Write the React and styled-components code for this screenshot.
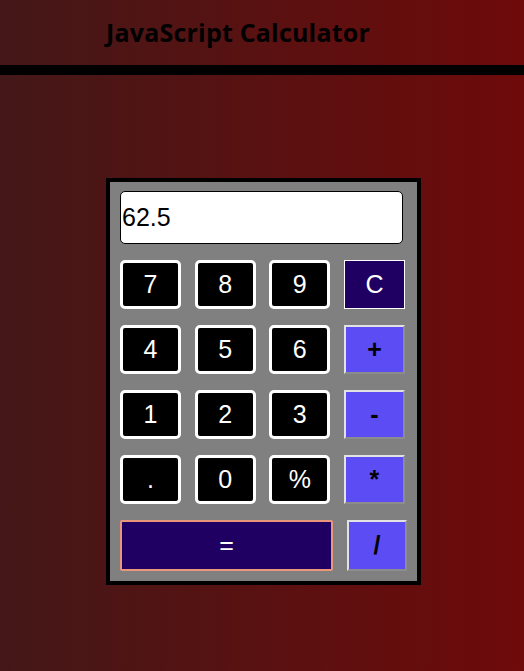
import React from 'react'
import styled, { createGlobalStyle } from 'styled-components'

const GlobalStyle = createGlobalStyle`
body{
    margin:0;
    font-family:"Liberation Sans", Arial, sans-serif;
}
`

const Page = styled.div`
min-height:100vh;
background:linear-gradient(to right, #441818, #6e0a0a);
overflow:hidden;
`

const Header = styled.header`
height:63px;
display:flex;
align-items:center;
padding-left:106px;
padding-bottom:2px;
border-bottom:10px solid #000;

h1{
    margin:0;
    font-family:"Open Sans", "DejaVu Sans", sans-serif;
    font-size:25px;
    font-weight:700;
    letter-spacing:0.2px;
    color:#000;
}
`

const Calculator = styled.div`
width:287px;
margin:103px 0 0 calc(50% - 156px);
background:#808080;
border:4px solid #000;
padding:9px 10px 10px;
box-sizing:content-box;
display:flex;
flex-direction:column;
gap:16px;
`

const Screen = styled.div`
width:280px;
height:51px;
background:#fff;
border:1px solid #000;
border-radius:5px;
display:flex;
align-items:center;
padding-left:1px;
font-size:25px;
color:#000;
`

const Keys = styled.div`
width:285px;
display:grid;
grid-template-columns:repeat(4, 61px);
grid-auto-rows:49px;
justify-content:space-between;
row-gap:16px;
`

const Key = styled.button`
font-family:"Liberation Sans", Arial, sans-serif;
font-size:25px;
padding:0;
display:flex;
justify-content:center;
align-items:center;
color:#fff;
background:#000;
border:3px solid #fff;
border-radius:5px;
`

const ClearKey = styled(Key)`
background:#1f0062;
border:1px solid #fff;
border-radius:0;
`

const OpKey = styled(Key)`
color:#000;
font-weight:700;
background:#5c4cf4;
border-radius:0;
border:2px solid;
border-color:#e2e2e2 #8c8c8c #8c8c8c #e2e2e2;
width:${p => p.$w || '61px'};
`

const BottomRow = styled.div`
display:flex;
gap:14px;
height:51px;
`

const EqualsKey = styled(Key)`
width:213px;
background:#1f0062;
border:2px solid #e9967a;
border-radius:2px;
`

const rows = [
    ['7', '8', '9'],
    ['4', '5', '6'],
    ['1', '2', '3'],
    ['.', '0', '%'],
]
const ops = ['C', '+', '-', '*']

const App = () => {
    return (
        <Page>
            <GlobalStyle />
            <Header>
                <h1>JavaScript Calculator</h1>
            </Header>
            <Calculator>
                <Screen>62.5</Screen>
                <Keys>
                    {rows.map((row, i) => (
                        <React.Fragment key={i}>
                            {row.map(k => <Key key={k}>{k}</Key>)}
                            {i === 0
                                ? <ClearKey>C</ClearKey>
                                : <OpKey>{ops[i]}</OpKey>}
                        </React.Fragment>
                    ))}
                </Keys>
                <BottomRow>
                    <EqualsKey>=</EqualsKey>
                    <OpKey $w="60px">/</OpKey>
                </BottomRow>
            </Calculator>
        </Page>
    )
}

export default App
